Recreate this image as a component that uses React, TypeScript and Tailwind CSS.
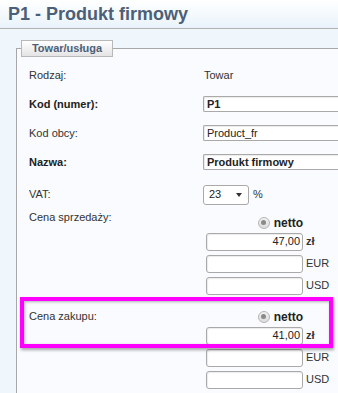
import type { ReactNode } from 'react'

const font = { fontFamily: '"Liberation Sans", Arial, sans-serif' }

function Field({ children, bold, className = '' }: { children?: ReactNode; bold?: boolean; className?: string }) {
  return (
    <div
      className={`flex h-[16px] items-center rounded-[2px] border border-[#a9a9a9] bg-white pl-[3px] text-[11px] text-[#222] shadow-[inset_1px_1px_1px_rgba(0,0,0,0.08)] ${bold ? 'font-bold' : ''} ${className}`}
    >
      {children}
    </div>
  )
}

function Radio() {
  return (
    <span className="flex h-[12px] w-[12px] items-center justify-center rounded-full border border-[#b5b5b5] bg-gradient-to-b from-[#f2f2f2] to-[#dcdcdc]">
      <span className="h-[5px] w-[5px] rounded-full bg-[#8a8a8a]" />
    </span>
  )
}

function Money({ value, suffix, bold }: { value?: string; suffix: string; bold?: boolean }) {
  return (
    <div className="flex items-center">
      <div className="ml-[3px] flex h-[18px] w-[97px] items-center justify-end rounded-[3px] border border-[#a9a9a9] bg-white pr-[2px] text-[11px] text-[#222] shadow-[inset_1px_1px_1px_rgba(0,0,0,0.08)]">
        {value}
      </div>
      <span className={`ml-[3px] text-[11px] text-[#333] ${bold ? 'font-bold' : ''}`}>{suffix}</span>
    </div>
  )
}

function PriceGroup({ label, value, showRadioGap, shift }: { label: string; value: string; showRadioGap: string; shift: string }) {
  return (
    <div className={`grid grid-cols-[174px_1fr] ${shift}`}>
      <div className="text-[11px] leading-[14px] text-[#333]">{label}</div>
      <div className="flex flex-col">
        <div className={`flex h-[12px] w-[100px] items-center justify-end gap-[4px] ${showRadioGap}`}>
          <Radio />
          <span className="text-[12px] font-bold text-[#222]">netto</span>
        </div>
        <div className="mt-[4px] flex flex-col gap-[4px]">
          <Money value={value} suffix="zł" bold />
          <Money suffix="EUR" />
          <Money suffix="USD" />
        </div>
      </div>
    </div>
  )
}

export default function App() {
  return (
    <div className="relative h-[393px] w-[338px] overflow-hidden bg-[#eff6fc]" style={font}>
      <header className="h-[29px] border-b border-[#b3b3b3] bg-gradient-to-b from-white to-[#e9f3fb] pl-[8px] pt-[4px]">
        <h1 className="text-[18px] font-bold leading-[20px] text-[#4c5f77]">P1 - Produkt firmowy</h1>
      </header>

      <div className="pl-[16px] pt-[19px]">
        <div className="relative border-l border-t border-[#a8a8a8] bg-[#f9fbfe] pb-[20px] pl-[12px] pt-[18px]">
          <div className="absolute left-[4px] top-[-9px] flex h-[17px] w-[92px] items-center justify-center border border-[#b8b8b8] bg-gradient-to-b from-white to-[#e4e4e4] text-[11px] font-bold text-[#4c5f77]">
            Towar/usługa
          </div>

          <div className="grid h-[16px] grid-cols-[174px_1fr] items-center text-[11px] text-[#333]">
            <span>Rodzaj:</span>
            <span className="pl-[1px]">Towar</span>
          </div>

          <div className="mt-[13px] grid grid-cols-[174px_1fr] items-center">
            <span className="text-[11px] font-bold text-[#222]">Kod (numer):</span>
            <Field bold className="rounded-r-none border-r-0">P1</Field>
          </div>

          <div className="mt-[12px] grid grid-cols-[174px_1fr] items-center">
            <span className="text-[11px] text-[#333]">Kod obcy:</span>
            <Field className="rounded-r-none border-r-0">Product_fr</Field>
          </div>

          <div className="mt-[13px] grid grid-cols-[174px_1fr] items-center">
            <span className="text-[11px] font-bold text-[#222]">Nazwa:</span>
            <Field bold className="rounded-r-none border-r-0">Produkt firmowy</Field>
          </div>

          <div className="mt-[14px] grid grid-cols-[174px_1fr] items-center">
            <span className="text-[11px] text-[#333]">VAT:</span>
            <div className="flex items-center">
              <div className="flex h-[20px] w-[46px] items-center justify-between rounded-[3px] border border-[#a9a9a9] bg-white pl-[5px] pr-[6px] text-[11px] text-[#222]">
                <span>23</span>
                <svg width="6" height="4" viewBox="0 0 6 4">
                  <path d="M0 0h6L3 4z" fill="#333" />
                </svg>
              </div>
              <span className="ml-[4px] text-[11px] text-[#333]">%</span>
            </div>
          </div>

          <PriceGroup label="Cena sprzedaży:" value="47,00" showRadioGap="mt-[7px]" shift="mt-[5px]" />
          <PriceGroup label="Cena zakupu:" value="41,00" showRadioGap="mt-[2px]" shift="mt-[14px]" />
        </div>
      </div>

      <div className="pointer-events-none absolute left-[20px] top-[297px] h-[51px] w-[313px] border-[4px] border-[#ff00ff] shadow-[1px_2px_3px_rgba(0,0,0,0.35),inset_1px_1px_3px_rgba(0,0,0,0.3)]" />
    </div>
  )
}
